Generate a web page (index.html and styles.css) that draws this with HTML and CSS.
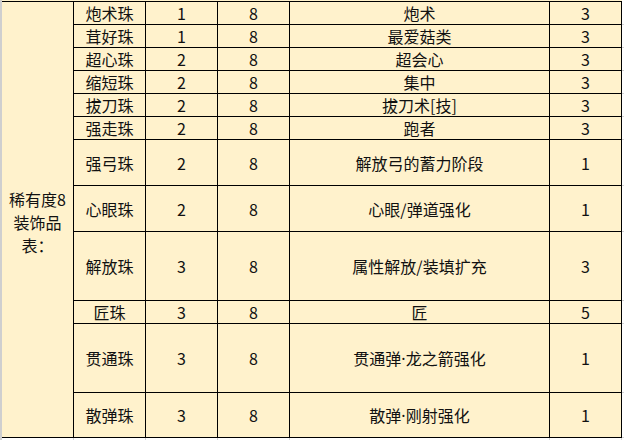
FILE: index.html
```html
<!DOCTYPE html>
<html lang="zh-CN">
<head>
<meta charset="utf-8">
<title>稀有度8装饰品表</title>
<link rel="stylesheet" href="styles.css">
</head>
<body>
<div class="sheet">
<table class="grid">
<colgroup>
<col class="c-lead"><col class="c-n"><col class="c-n"><col class="c-n"><col class="c-skill"><col class="c-n"><col class="c-edge">
</colgroup>
<tbody>
<tr class="clip"><td></td><td></td><td></td><td></td><td></td><td></td><td class="blank"></td></tr>
<tr class="r1 first">
<td class="lead" rowspan="12">稀有度8<br>装饰品<br>表<span class="colon">：</span></td>
<td>炮术珠</td><td>1</td><td>8</td><td>炮术</td><td>3</td><td class="edge"></td></tr>
<tr class="r1"><td>茸好珠</td><td>1</td><td>8</td><td>最爱菇类</td><td>3</td><td class="edge"></td></tr>
<tr class="r1"><td>超心珠</td><td>2</td><td>8</td><td>超会心</td><td>3</td><td class="edge"></td></tr>
<tr class="r1"><td>缩短珠</td><td>2</td><td>8</td><td>集中</td><td>3</td><td class="edge"></td></tr>
<tr class="r1"><td>拔刀珠</td><td>2</td><td>8</td><td>拔刀术[技]</td><td>3</td><td class="edge"></td></tr>
<tr class="r1"><td>强走珠</td><td>2</td><td>8</td><td>跑者</td><td>3</td><td class="edge"></td></tr>
<tr class="r2"><td>强弓珠</td><td>2</td><td>8</td><td>解放弓的蓄力阶段</td><td>1</td><td class="edge"></td></tr>
<tr class="r2"><td>心眼珠</td><td>2</td><td>8</td><td>心眼/弹道强化</td><td>1</td><td class="edge"></td></tr>
<tr class="r3"><td>解放珠</td><td>3</td><td>8</td><td>属性解放/装填扩充</td><td>3</td><td class="edge"></td></tr>
<tr class="r1"><td>匠珠</td><td>3</td><td>8</td><td>匠</td><td>5</td><td class="edge"></td></tr>
<tr class="r3"><td>贯通珠</td><td>3</td><td>8</td><td>贯通弹<span class="dot">·</span>龙之箭强化</td><td>1</td><td class="edge"></td></tr>
<tr class="r2b"><td>散弹珠</td><td>3</td><td>8</td><td>散弹<span class="dot">·</span>刚射强化</td><td>1</td><td class="edge"></td></tr>
<tr class="foot"><td></td><td></td><td></td><td></td><td></td><td></td><td class="blank"></td></tr>
</tbody>
</table>
</div>
</body>
</html>
```
FILE: styles.css
```css
html, body {
  margin: 0;
  padding: 0;
  background: #ffffff;
}

.sheet {
  width: 624px;
  height: 440px;
  overflow: hidden;
  border-left: 2px solid #cfcfcf;
  box-sizing: border-box;
}

.grid {
  table-layout: fixed;
  width: 622px;
  border-collapse: separate;
  border-spacing: 0;
  font-family: "Noto Sans CJK SC", "Noto Sans", sans-serif;
  font-size: 16px;
  color: #111111;
}

.c-lead { width: 72px; }
.c-n { width: 72px; }
.c-skill { width: 260px; }
.c-edge { width: 2px; }

.grid td {
  box-sizing: border-box;
  padding: 0;
  background: #fff2cc;
  border-right: 1px solid #000;
  border-bottom: 1px solid #000;
  text-align: center;
  vertical-align: middle;
  line-height: 22px;
  white-space: nowrap;
  overflow: hidden;
}

.dot {
  font-family: "Noto Sans", "DejaVu Sans", sans-serif;
}

.colon {
  font-family: "Noto Sans CJK TC", sans-serif;
}

.grid td.edge {
  background: #ffffff;
  border-right: 0;
  border-bottom: 1px solid #d4d4d4;
}

.grid tr.first td {
  border-top: 1px solid #000;
}

.grid tr.first td.edge {
  border-top: 0;
}

.grid td.lead {
  line-height: 23px;
  padding-top: 5px;
}

.clip { height: 1px; }
.grid .clip td {
  border: 0;
  font-size: 0;
  line-height: 0;
}
.grid td.blank {
  background: #ffffff;
  border: 0;
}

.r1 { height: 23px; }
.r1.first { height: 24px; }
.r2 { height: 46px; }
.r3 { height: 69px; }
.r2b { height: 45px; }

.foot { height: 2px; }
.grid .foot td {
  background: #ffffff;
  border-bottom: 0;
  border-right: 1px solid #d4d4d4;
  font-size: 0;
  line-height: 0;
}
.grid .foot td.blank { border: 0; }
```
